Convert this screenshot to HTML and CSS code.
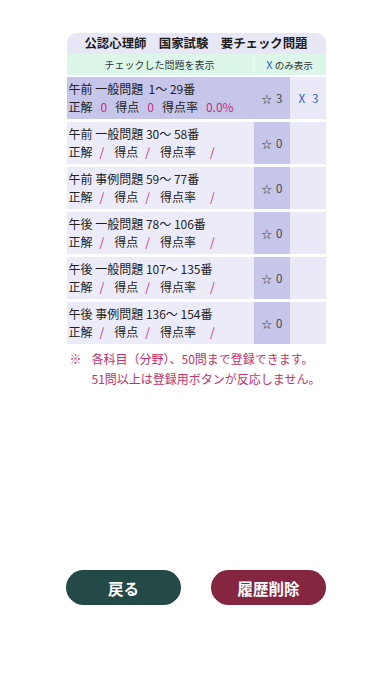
FILE: index.html
```html
<!DOCTYPE html>
<html lang="ja">
<head>
<meta charset="utf-8">
<link rel="stylesheet" href="styles.css">
</head>
<body>
<div class="page">
  <div class="panel">
    <div class="title">公認心理師　国家試験　要チェック問題</div>
    <div class="head">
      <div class="h-main">チェックした問題を表示</div>
      <div class="h-x"><span class="blue">X</span> のみ表示</div>
    </div>
    <div class="rows">
      <div class="row active">
        <div class="info">
          <div class="l1">午前 一般問題  1〜 29番</div>
          <div class="l2"><span class="lb">正解</span><span class="v">0</span><span class="lb">得点</span><span class="v">0</span><span class="lb">得点率</span><span class="v">0.0%</span></div>
        </div>
        <div class="star"><span class="ic">☆</span><span>3</span></div>
        <div class="xc"><span>X</span><span>3</span></div>
      </div>
      <div class="row">
        <div class="info">
          <div class="l1">午前 一般問題 30〜 58番</div>
          <div class="l2"><span class="lb">正解</span><span class="v">/</span><span class="lb">得点</span><span class="v">/</span><span class="lb">得点率</span><span class="v wide">/</span></div>
        </div>
        <div class="star"><span class="ic">☆</span><span>0</span></div>
        <div class="xc"></div>
      </div>
      <div class="row">
        <div class="info">
          <div class="l1">午前 事例問題 59〜 77番</div>
          <div class="l2"><span class="lb">正解</span><span class="v">/</span><span class="lb">得点</span><span class="v">/</span><span class="lb">得点率</span><span class="v wide">/</span></div>
        </div>
        <div class="star"><span class="ic">☆</span><span>0</span></div>
        <div class="xc"></div>
      </div>
      <div class="row">
        <div class="info">
          <div class="l1">午後 一般問題 78〜 106番</div>
          <div class="l2"><span class="lb">正解</span><span class="v">/</span><span class="lb">得点</span><span class="v">/</span><span class="lb">得点率</span><span class="v wide">/</span></div>
        </div>
        <div class="star"><span class="ic">☆</span><span>0</span></div>
        <div class="xc"></div>
      </div>
      <div class="row">
        <div class="info">
          <div class="l1">午後 一般問題 107〜 135番</div>
          <div class="l2"><span class="lb">正解</span><span class="v">/</span><span class="lb">得点</span><span class="v">/</span><span class="lb">得点率</span><span class="v wide">/</span></div>
        </div>
        <div class="star"><span class="ic">☆</span><span>0</span></div>
        <div class="xc"></div>
      </div>
      <div class="row">
        <div class="info">
          <div class="l1">午後 事例問題 136〜 154番</div>
          <div class="l2"><span class="lb">正解</span><span class="v">/</span><span class="lb">得点</span><span class="v">/</span><span class="lb">得点率</span><span class="v wide">/</span></div>
        </div>
        <div class="star"><span class="ic">☆</span><span>0</span></div>
        <div class="xc"></div>
      </div>
    </div>
  </div>
  <div class="note">
    <span class="mark">※</span>
    <span class="ntext">各科目（分野）、50問まで登録できます。<br>51問以上は登録用ボタンが反応しません。</span>
  </div>
  <div class="buttons">
    <div class="btn back">戻る</div>
    <div class="btn del">履歴削除</div>
  </div>
</div>
</body>
</html>
```

FILE: styles.css
```css
* { box-sizing: border-box; }
html, body { margin: 0; padding: 0; background: #ffffff; }
body {
  font-family: "Noto Sans CJK JP", "Noto Sans", sans-serif;
  color: #222;
  width: 392px;
  height: 696px;
}
.page {
  display: flex;
  flex-direction: column;
  align-items: center;
  padding-top: 33px;
}
.panel {
  width: 259px;
  display: flex;
  flex-direction: column;
}
.title {
  height: 21px;
  background: #e7e7f6;
  border-radius: 10px 10px 0 0;
  font-size: 12.4px;
  font-weight: 700;
  line-height: 21px;
  text-align: center;
  color: #1c1c1c;
}
.head {
  display: flex;
  height: 21px;
  font-size: 10px;
  line-height: 21px;
  color: #333;
}
.h-main {
  width: 187px;
  background: #dcf6ea;
  text-align: center;
  border-right: 1px solid #fff;
}
.h-x {
  flex: 1;
  background: #dcf6ea;
  text-align: center;
  font-size: 9.5px;
}
.blue { color: #2d63c6; font-size: 11px; }
.rows {
  display: flex;
  flex-direction: column;
  gap: 3px;
  margin-top: 2px;
}
.row {
  display: flex;
  height: 42px;
  background: #ececf8;
}
.row.active { background: #c6c6ea; }
.info {
  width: 187px;
  padding: 3px 0 0 2px;
  font-size: 12px;
  line-height: 18px;
  color: #222;
}
.l1 { white-space: pre; }
.l2 { display: flex; align-items: baseline; white-space: pre; }
.lb { display: inline-block; }
.v {
  display: inline-block;
  color: #c4307a;
  padding: 0 8px;
}
.row:not(.active) .v { padding: 0 10px 0 7px; }
.row:not(.active) .v.wide { padding-left: 14px; }
.star {
  width: 36px;
  background: #c6c6ea;
  display: flex;
  align-items: center;
  justify-content: center;
  gap: 4px;
  font-size: 11.5px;
  color: #444;
  padding-left: 1px;
}
.star .ic { font-size: 10.5px; }
.xc {
  flex: 1;
  background: #e9e9f7;
  display: flex;
  align-items: center;
  justify-content: center;
  gap: 7px;
  font-size: 11.5px;
  color: #2d63c6;
  padding-left: 2px;
}
.note {
  width: 259px;
  display: flex;
  margin-top: 5px;
  font-size: 12px;
  line-height: 20px;
  color: #c2306e;
  padding-left: 3px;
}
.mark { width: 22px; }
.ntext { flex: 1; white-space: nowrap; }
.buttons {
  width: 260px;
  display: flex;
  justify-content: space-between;
  margin-top: 181px;
}
.btn {
  width: 115px;
  height: 35px;
  border-radius: 18px;
  display: flex;
  align-items: center;
  justify-content: center;
  color: #fff;
  font-weight: 700;
  font-size: 15.5px;
}
.back { background: #244a47; }
.del { background: #852640; }
```
